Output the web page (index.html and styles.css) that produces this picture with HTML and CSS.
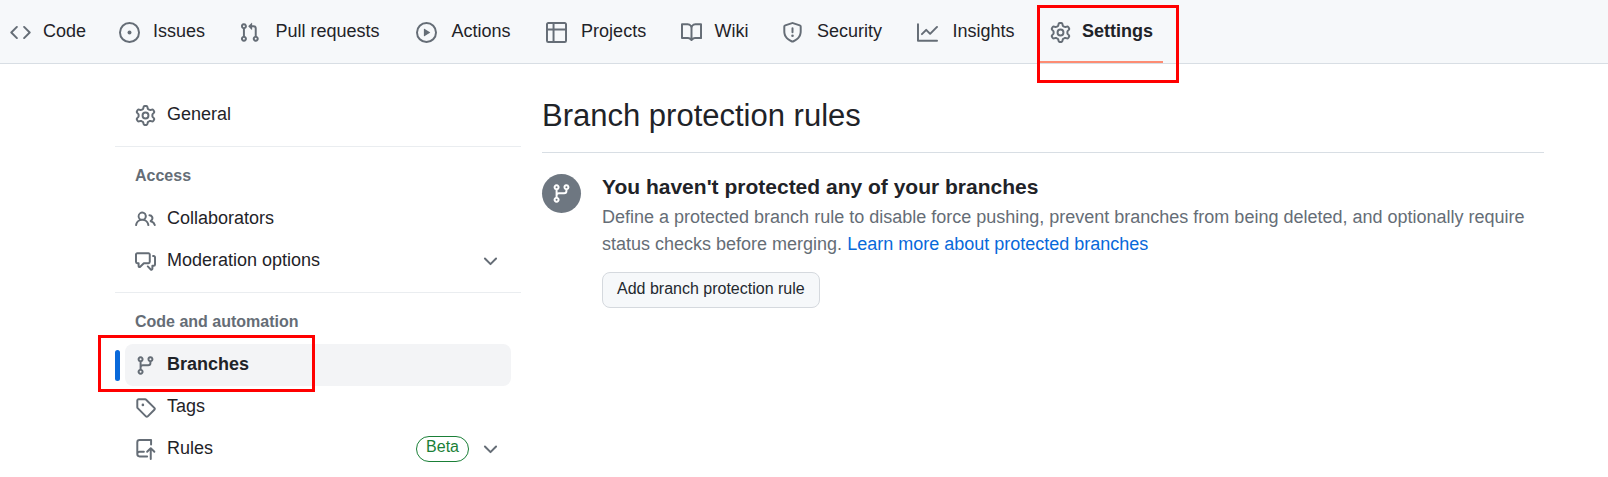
FILE: index.html
```
<!DOCTYPE html>
<html lang="en">
<head>
<meta charset="utf-8">
<title>Branch protection rules</title>
<link rel="stylesheet" href="styles.css">
</head>
<body>
<svg class="sprite" aria-hidden="true">
  <symbol id="gear" viewBox="0 0 16 16"><path d="M8 0a8.2 8.2 0 0 1 .701.031C9.444.095 9.99.645 10.16 1.29l.288 1.107c.018.066.079.158.212.224.231.114.454.243.668.386.123.082.233.09.299.071l1.103-.303c.644-.176 1.392.021 1.82.63.27.385.506.792.704 1.218.315.675.111 1.422-.364 1.891l-.814.806c-.049.048-.098.147-.088.294.016.257.016.515 0 .772-.01.147.038.246.088.294l.814.806c.475.469.679 1.216.364 1.891a7.977 7.977 0 0 1-.704 1.217c-.428.61-1.176.807-1.82.63l-1.102-.302c-.067-.019-.177-.011-.3.071a5.909 5.909 0 0 1-.668.386c-.133.066-.194.158-.211.224l-.29 1.106c-.168.646-.715 1.196-1.458 1.26a8.006 8.006 0 0 1-1.402 0c-.743-.064-1.289-.614-1.458-1.26l-.289-1.106c-.018-.066-.079-.158-.212-.224a5.738 5.738 0 0 1-.668-.386c-.123-.082-.233-.09-.299-.071l-1.103.303c-.644.176-1.392-.021-1.82-.63a8.12 8.12 0 0 1-.704-1.218c-.315-.675-.111-1.422.363-1.891l.815-.806c.05-.048.098-.147.088-.294a6.214 6.214 0 0 1 0-.772c.01-.147-.038-.246-.088-.294l-.815-.806C.635 6.045.431 5.298.746 4.623a7.92 7.92 0 0 1 .704-1.217c.428-.61 1.176-.807 1.82-.63l1.102.302c.067.019.177.011.3-.071.214-.143.437-.272.668-.386.133-.066.194-.158.211-.224l.29-1.106C6.009.645 6.556.095 7.299.03 7.53.01 7.764 0 8 0Zm-.571 1.525c-.036.003-.108.036-.137.146l-.289 1.105c-.147.561-.549.967-.998 1.189-.173.086-.34.183-.5.29-.417.278-.97.423-1.529.27l-1.103-.303c-.109-.03-.175.016-.195.045-.22.312-.412.644-.573.99-.014.031-.021.11.059.19l.815.806c.411.406.562.957.53 1.456a4.709 4.709 0 0 0 0 .582c.032.499-.119 1.05-.53 1.456l-.815.806c-.081.08-.073.159-.059.19.162.346.353.677.573.989.02.03.085.076.195.046l1.102-.303c.56-.153 1.113-.008 1.53.27.161.107.328.204.501.29.447.222.85.629.997 1.189l.289 1.105c.029.109.101.143.137.146a6.6 6.6 0 0 0 1.142 0c.036-.003.108-.036.137-.146l.289-1.105c.147-.561.549-.967.998-1.189.173-.086.34-.183.5-.29.417-.278.97-.423 1.529-.27l1.103.303c.109.029.175-.016.195-.045.22-.313.411-.644.573-.99.014-.031.021-.11-.059-.19l-.815-.806c-.411-.406-.562-.957-.53-1.456a4.709 4.709 0 0 0 0-.582c-.032-.499.119-1.05.53-1.456l.815-.806c.081-.08.073-.159.059-.19a6.464 6.464 0 0 0-.573-.989c-.02-.03-.085-.076-.195-.046l-1.102.303c-.56.153-1.113.008-1.53-.27a4.44 4.44 0 0 0-.501-.29c-.447-.222-.85-.629-.997-1.189l-.289-1.105c-.029-.11-.101-.143-.137-.146a6.6 6.6 0 0 0-1.142 0ZM11 8a3 3 0 1 1-6 0 3 3 0 0 1 6 0ZM9.5 8a1.5 1.5 0 1 0-3.001.001A1.5 1.5 0 0 0 9.5 8Z"/></symbol>
  <symbol id="branch" viewBox="0 0 16 16"><path d="M9.5 3.25a2.25 2.25 0 1 1 3 2.122V6A2.5 2.5 0 0 1 10 8.5H6a1 1 0 0 0-1 1v1.128a2.251 2.251 0 1 1-1.5 0V5.372a2.25 2.25 0 1 1 1.5 0v1.836A2.493 2.493 0 0 1 6 7h4a1 1 0 0 0 1-1v-.628A2.25 2.25 0 0 1 9.5 3.25Zm-6 0a.75.75 0 1 0 1.5 0 .75.75 0 0 0-1.5 0Zm8.25-.75a.75.75 0 1 0 0 1.5.75.75 0 0 0 0-1.5ZM4.25 12a.75.75 0 1 0 0 1.5.75.75 0 0 0 0-1.5Z"/></symbol>
  <symbol id="chevron" viewBox="0 0 16 16"><path d="M12.78 5.22a.749.749 0 0 1 0 1.06l-4.25 4.25a.749.749 0 0 1-1.06 0L3.22 6.28a.749.749 0 1 1 1.06-1.06L8 8.939l3.72-3.719a.749.749 0 0 1 1.06 0Z"/></symbol>
</svg>

<nav class="tabs" aria-label="Repository">
  <a class="tab" href="#"><svg class="icon" viewBox="0 0 16 16"><path d="m11.28 3.22 4.25 4.25a.75.75 0 0 1 0 1.06l-4.25 4.25a.749.749 0 0 1-1.275-.326.749.749 0 0 1 .215-.734L13.94 8l-3.72-3.72a.749.749 0 0 1 .326-1.275.749.749 0 0 1 .734.215Zm-6.56 0a.751.751 0 0 1 1.042.018.751.751 0 0 1 .018 1.042L2.06 8l3.72 3.72a.749.749 0 0 1-.326 1.275.749.749 0 0 1-.734-.215L.47 8.53a.75.75 0 0 1 0-1.06Z"/></svg><span class="tab-label" data-content="Code">Code</span></a>
  <a class="tab" href="#"><svg class="icon" viewBox="0 0 16 16"><path d="M8 9.5a1.5 1.5 0 1 0 0-3 1.5 1.5 0 0 0 0 3Z"/><path d="M8 0a8 8 0 1 1 0 16A8 8 0 0 1 8 0ZM1.5 8a6.5 6.5 0 1 0 13 0 6.5 6.5 0 0 0-13 0Z"/></svg><span class="tab-label" data-content="Issues">Issues</span></a>
  <a class="tab" href="#"><svg class="icon" viewBox="0 0 16 16"><path d="M1.5 3.25a2.25 2.25 0 1 1 3 2.122v5.256a2.251 2.251 0 1 1-1.5 0V5.372A2.25 2.25 0 0 1 1.5 3.25Zm5.677-.177L9.573.677A.25.25 0 0 1 10 .854V2.5h1A2.5 2.5 0 0 1 13.5 5v5.628a2.251 2.251 0 1 1-1.5 0V5a1 1 0 0 0-1-1h-1v1.646a.25.25 0 0 1-.427.177L7.177 3.427a.25.25 0 0 1 0-.354ZM3.75 2.5a.75.75 0 1 0 0 1.5.75.75 0 0 0 0-1.5Zm0 9.5a.75.75 0 1 0 0 1.5.75.75 0 0 0 0-1.5Zm8.25.75a.75.75 0 1 0 1.5 0 .75.75 0 0 0-1.5 0Z"/></svg><span class="tab-label" data-content="Pull requests">Pull requests</span></a>
  <a class="tab" href="#"><svg class="icon" viewBox="0 0 16 16"><path d="M8 0a8 8 0 1 1 0 16A8 8 0 0 1 8 0ZM1.5 8a6.5 6.5 0 1 0 13 0 6.5 6.5 0 0 0-13 0Zm4.879-2.773 4.264 2.559a.25.25 0 0 1 0 .428l-4.264 2.559A.25.25 0 0 1 6 10.559V5.442a.25.25 0 0 1 .379-.215Z"/></svg><span class="tab-label" data-content="Actions">Actions</span></a>
  <a class="tab" href="#"><svg class="icon" viewBox="0 0 16 16"><path d="M0 1.75C0 .784.784 0 1.75 0h12.5C15.216 0 16 .784 16 1.75v12.5A1.75 1.75 0 0 1 14.25 16H1.75A1.75 1.75 0 0 1 0 14.25ZM6.5 6.5v8h7.75a.25.25 0 0 0 .25-.25V6.5Zm8-1.5V1.75a.25.25 0 0 0-.25-.25H6.5V5Zm-13 1.5v7.75c0 .138.112.25.25.25H5v-8ZM5 5V1.5H1.75a.25.25 0 0 0-.25.25V5Z"/></svg><span class="tab-label" data-content="Projects">Projects</span></a>
  <a class="tab" href="#"><svg class="icon" viewBox="0 0 16 16"><path d="M0 1.75A.75.75 0 0 1 .75 1h4.253c1.227 0 2.317.59 3 1.501A3.743 3.743 0 0 1 11.006 1h4.245a.75.75 0 0 1 .75.75v10.5a.75.75 0 0 1-.75.75h-4.507a2.25 2.25 0 0 0-1.591.659l-.622.621a.75.75 0 0 1-1.06 0l-.622-.621A2.25 2.25 0 0 0 5.258 13H.75a.75.75 0 0 1-.75-.75Zm7.251 10.324.004-5.073-.002-2.253A2.25 2.25 0 0 0 5.003 2.5H1.5v9h3.757a3.75 3.75 0 0 1 1.994.574ZM8.755 4.75l-.004 7.322a3.752 3.752 0 0 1 1.992-.572H14.5v-9h-3.495a2.25 2.25 0 0 0-2.25 2.25Z"/></svg><span class="tab-label" data-content="Wiki">Wiki</span></a>
  <a class="tab" href="#"><svg class="icon" viewBox="0 0 16 16"><path d="M7.467.133a1.748 1.748 0 0 1 1.066 0l5.25 1.68A1.75 1.75 0 0 1 15 3.48V7c0 1.566-.32 3.182-1.303 4.682-.983 1.498-2.585 2.813-5.032 3.855a1.697 1.697 0 0 1-1.33 0c-2.447-1.042-4.049-2.357-5.032-3.855C1.32 10.182 1 8.566 1 7V3.48a1.75 1.75 0 0 1 1.217-1.667Zm.61 1.429a.25.25 0 0 0-.153 0l-5.25 1.68a.25.25 0 0 0-.174.238V7c0 1.358.275 2.666 1.057 3.86.784 1.194 2.121 2.34 4.366 3.297a.196.196 0 0 0 .154 0c2.245-.956 3.582-2.104 4.366-3.298C13.225 9.666 13.5 8.36 13.5 7V3.48a.251.251 0 0 0-.174-.237l-5.25-1.68ZM8.75 4.75v3a.75.75 0 0 1-1.5 0v-3a.75.75 0 0 1 1.5 0ZM9 10.5a1 1 0 1 1-2 0 1 1 0 0 1 2 0Z"/></svg><span class="tab-label" data-content="Security">Security</span></a>
  <a class="tab" href="#"><svg class="icon" viewBox="0 0 16 16"><path d="M1.5 1.75V13.5h13.75a.75.75 0 0 1 0 1.5H.75a.75.75 0 0 1-.75-.75V1.75a.75.75 0 0 1 1.5 0Zm14.28 2.53-5.25 5.25a.75.75 0 0 1-1.06 0L7 7.06 4.28 9.78a.751.751 0 0 1-1.042-.018.751.751 0 0 1-.018-1.042l3.25-3.25a.75.75 0 0 1 1.06 0L10 7.94l4.72-4.72a.751.751 0 0 1 1.042.018.751.751 0 0 1 .018 1.042Z"/></svg><span class="tab-label" data-content="Insights">Insights</span></a>
  <a class="tab tab-active" href="#" aria-current="page"><svg class="icon"><use href="#gear"/></svg><span class="tab-label" data-content="Settings">Settings</span><span class="marker marker-tab"></span></a>
</nav>

<div class="layout">
  <nav class="sidebar" aria-label="Settings">
    <ul class="group">
      <li><a class="item" href="#"><svg class="icon"><use href="#gear"/></svg><span class="item-label">General</span></a></li>
    </ul>
    <h2 class="group-title"><span>Access</span></h2>
    <ul class="group">
      <li><a class="item" href="#"><svg class="icon" viewBox="0 0 16 16"><path d="M2 5.5a3.5 3.5 0 1 1 5.898 2.549 5.508 5.508 0 0 1 3.034 4.084.75.75 0 1 1-1.482.235 4 4 0 0 0-7.9 0 .75.75 0 0 1-1.482-.236A5.507 5.507 0 0 1 3.102 8.05 3.493 3.493 0 0 1 2 5.5ZM11 4a3.001 3.001 0 0 1 2.22 5.018 5.01 5.01 0 0 1 2.56 3.012.749.749 0 0 1-.885.954.752.752 0 0 1-.549-.514 3.507 3.507 0 0 0-2.522-2.372.75.75 0 0 1-.574-.73v-.352a.75.75 0 0 1 .416-.672A1.5 1.5 0 0 0 11 5.5.75.75 0 0 1 11 4Zm-5.5-.5a2 2 0 1 0-.001 3.999A2 2 0 0 0 5.5 3.5Z"/></svg><span class="item-label">Collaborators</span></a></li>
      <li><button class="item" type="button"><svg class="icon" viewBox="0 0 16 16"><path d="M1.75 1h8.5c.966 0 1.75.784 1.75 1.75v5.5A1.75 1.75 0 0 1 10.25 10H7.061l-2.574 2.573A1.458 1.458 0 0 1 2 11.543V10h-.25A1.75 1.75 0 0 1 0 8.25v-5.5C0 1.784.784 1 1.75 1ZM1.5 2.75v5.5c0 .138.112.25.25.25h1a.75.75 0 0 1 .75.75v2.19l2.72-2.72a.749.749 0 0 1 .53-.22h3.5a.25.25 0 0 0 .25-.25v-5.5a.25.25 0 0 0-.25-.25h-8.5a.25.25 0 0 0-.25.25Zm13 2a.25.25 0 0 0-.25-.25h-.5a.75.75 0 0 1 0-1.5h.5c.966 0 1.75.784 1.75 1.75v5.5A1.75 1.75 0 0 1 14.25 12H14v1.543a1.458 1.458 0 0 1-2.487 1.03L9.22 12.28a.749.749 0 0 1 .326-1.275.749.749 0 0 1 .734.215l2.22 2.22v-2.19a.75.75 0 0 1 .75-.75h1a.25.25 0 0 0 .25-.25Z"/></svg><span class="item-label">Moderation options</span><svg class="icon"><use href="#chevron"/></svg></button></li>
    </ul>
    <h2 class="group-title"><span>Code and automation</span></h2>
    <ul class="group">
      <li><a class="item item-active" href="#" aria-current="page"><svg class="icon"><use href="#branch"/></svg><span class="item-label">Branches</span><span class="marker marker-item"></span></a></li>
      <li><a class="item" href="#"><svg class="icon" viewBox="0 0 16 16"><path d="M1 7.775V2.75C1 1.784 1.784 1 2.75 1h5.025c.464 0 .91.184 1.238.513l6.25 6.25a1.75 1.75 0 0 1 0 2.474l-5.026 5.026a1.75 1.75 0 0 1-2.474 0l-6.25-6.25A1.752 1.752 0 0 1 1 7.775Zm1.5 0c0 .066.026.13.073.177l6.25 6.25a.25.25 0 0 0 .354 0l5.025-5.025a.25.25 0 0 0 0-.354l-6.25-6.25a.25.25 0 0 0-.177-.073H2.75a.25.25 0 0 0-.25.25ZM6 5a1 1 0 1 1 0 2 1 1 0 0 1 0-2Z"/></svg><span class="item-label">Tags</span></a></li>
      <li><button class="item" type="button"><svg class="icon" viewBox="0 0 16 16"><path d="M1 2.5A2.5 2.5 0 0 1 3.5 0h8.75a.75.75 0 0 1 .75.75v3.5a.75.75 0 0 1-1.5 0V1.5h-8a1 1 0 0 0-1 1v6.708A2.493 2.493 0 0 1 3.5 9h3.25a.75.75 0 0 1 0 1.5H3.5a1 1 0 0 0 0 2h5.75a.75.75 0 0 1 0 1.5H3.5A2.5 2.5 0 0 1 1 11.5Zm13.23 7.79-1.48-1.48v6.44a.75.75 0 0 1-1.5 0V8.81l-1.48 1.48a.751.751 0 0 1-1.042-.018.751.751 0 0 1-.018-1.042l2.76-2.76a.75.75 0 0 1 1.06 0l2.76 2.76a.751.751 0 0 1-.018 1.042.751.751 0 0 1-1.042.018Z"/></svg><span class="item-label">Rules</span><span class="badge">Beta</span><svg class="icon"><use href="#chevron"/></svg></button></li>
    </ul>
  </nav>

  <main class="content">
    <h1 class="title">Branch protection rules</h1>
    <section class="empty">
      <span class="circle"><svg class="icon"><use href="#branch"/></svg></span>
      <div class="empty-body">
        <h2 class="empty-title">You haven't protected any of your branches</h2>
        <p class="text">Define a protected branch rule to disable force pushing, prevent branches from being deleted, and optionally require status checks before merging. <a class="link" href="#">Learn more about protected branches</a></p>
        <button class="button" type="button">Add branch protection rule</button>
      </div>
    </section>
  </main>
</div>
</body>
</html>
```
FILE: styles.css
```
* {
  box-sizing: border-box;
}

body {
  margin: 0;
  background: #fff;
  color: #1f2328;
  font: 18px/27px "Liberation Sans", Arial, sans-serif;
}

h1, h2, p, ul {
  margin: 0;
  padding: 0;
}

ul {
  list-style: none;
}

.sprite {
  display: none;
}

.icon {
  flex: none;
  width: 21px;
  height: 21px;
  fill: #656d76;
}

/* Repository tabs */
.tabs {
  display: flex;
  gap: 12px;
  height: 64px;
  background: #f6f8fa;
  border-bottom: 1px solid #d8dee4;
}

.tab {
  position: relative;
  display: flex;
  align-items: center;
  gap: 11px;
  padding: 1px 10px 0;
  color: inherit;
  text-decoration: none;
  white-space: nowrap;
}

.tab-label {
  display: grid;
  justify-items: center;
  padding-bottom: 2px;
}

/* Reserves the bold width so that tabs keep their size when selected */
.tab-label::after {
  content: attr(data-content);
  height: 0;
  overflow: hidden;
  visibility: hidden;
  font-weight: 700;
}

.tab-active {
  font-weight: 700;
}

.tab-active::after {
  content: "";
  position: absolute;
  right: 0;
  bottom: 0;
  left: 0;
  height: 2px;
  background: #fd8c73;
}

/* Red highlight frames */
.marker {
  position: absolute;
  z-index: 1;
  border: 3px solid #f00;
  pointer-events: none;
}

.marker-tab {
  top: 5px;
  right: -16px;
  bottom: -20px;
  left: -3px;
}

.marker-item {
  top: -9px;
  bottom: -6px;
  left: -27px;
  width: 217px;
}

/* Page columns */
.layout {
  display: flex;
  gap: 21px;
  padding: 30px 64px 0 115px;
}

.sidebar {
  flex: none;
  width: 406px;
}

.group {
  padding: 0 10px;
}

.group-title {
  margin-top: 10px;
  padding: 15px 20px 9px;
  border-top: 1px solid #eaedf0;
  color: #656d76;
  font-size: 16px;
  line-height: 27px;
}

.item {
  position: relative;
  display: flex;
  align-items: center;
  gap: 11px;
  width: 100%;
  height: 42px;
  padding: 0 10px;
  border: 0;
  border-radius: 8px;
  background: none;
  color: inherit;
  font: inherit;
  text-align: left;
  text-decoration: none;
}

.item-label {
  flex: 1;
  padding-bottom: 2px;
}

.item-active {
  background: #f3f4f6;
  font-weight: 700;
}

.item-active::before {
  content: "";
  position: absolute;
  top: 6px;
  bottom: 5px;
  left: -10px;
  width: 5px;
  border-radius: 5px;
  background: #0969da;
}

.badge {
  padding: 0 9px 4px;
  border: 1px solid #1a7f37;
  border-radius: 26px;
  color: #1a7f37;
  font-size: 16px;
  line-height: 20px;
}

/* Main column */
.content {
  flex: 1;
  min-width: 0;
}

.title {
  padding-bottom: 15px;
  border-bottom: 1px solid #d8dee4;
  font-size: 31px;
  font-weight: 400;
  line-height: 43px;
}

.empty {
  display: flex;
  gap: 21px;
  padding-top: 21px;
}

.circle {
  display: flex;
  flex: none;
  align-items: center;
  justify-content: center;
  width: 39px;
  height: 39px;
  border-radius: 50%;
  background: #6e7781;
}

.circle .icon {
  fill: #fff;
}

.empty-title {
  padding-bottom: 5px;
  font-size: 21px;
  line-height: 25px;
}

.text {
  color: #656d76;
}

.link {
  color: #0969da;
  text-decoration: none;
}

.button {
  margin-top: 14px;
  padding: 6px 14px 8px;
  border: 1px solid #d5d9de;
  border-radius: 8px;
  background: #f6f8fa;
  color: #24292f;
  font: 16px/20px "Liberation Sans", Arial, sans-serif;
}
```
